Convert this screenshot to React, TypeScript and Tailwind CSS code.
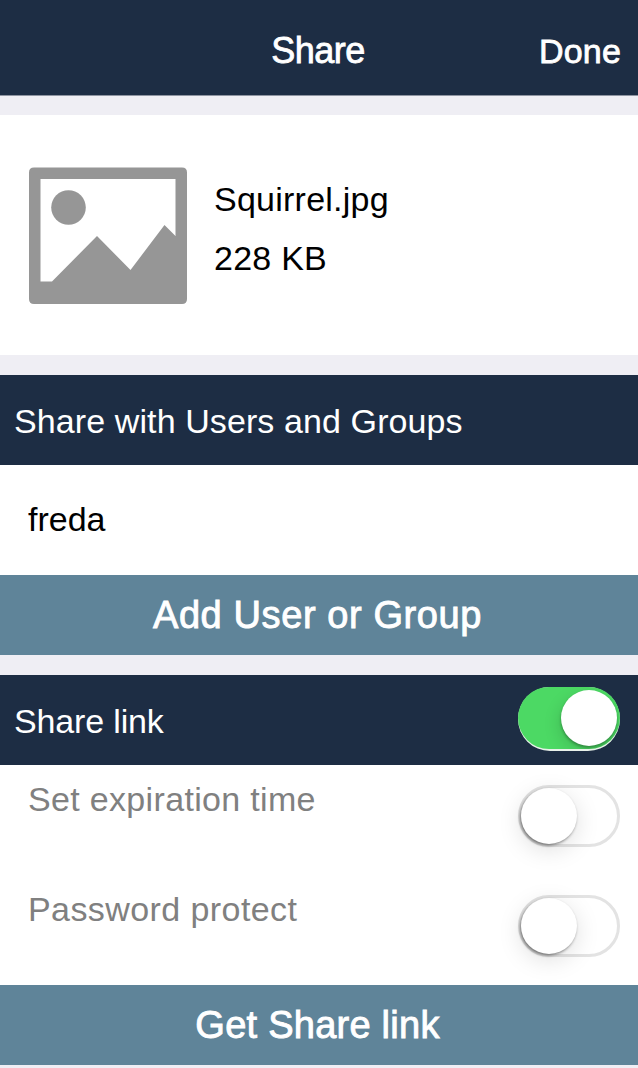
import type { ReactNode } from "react";

function Toggle({ on = false }: { on?: boolean }) {
  if (on) {
    return (
      <div role="switch" aria-checked="true" className="h-[64px] w-[102px] shrink-0 rounded-full bg-[#e9f2ea]">
        <div className="flex h-[62px] items-center justify-end overflow-hidden rounded-full bg-[#4cd964] pr-[3px]">
          <div className="size-[56px] rounded-full bg-white shadow-[-3px_6px_16px_rgba(0,0,0,0.12),0_2px_3px_rgba(0,0,0,0.3)]" />
        </div>
      </div>
    );
  }
  return (
    <div role="switch" aria-checked="false" className="flex h-[62px] w-[102px] shrink-0 items-center rounded-full border-[3px] border-[#e3e3e3] bg-white">
      <div className="size-[56px] rounded-full bg-white shadow-[0_6px_24px_rgba(0,0,0,0.13),-1px_1.5px_3px_rgba(0,0,0,0.45)]" />
    </div>
  );
}

function SectionBar({ title, children }: { title: ReactNode; children?: ReactNode }) {
  return (
    <div className="flex h-[90px] shrink-0 justify-between bg-[#1d2d44] pr-[18px] pl-[14px] text-white">
      <h2 className="leading-[92px]">{title}</h2>
      {children}
    </div>
  );
}

function ActionButton({ children }: { children: ReactNode }) {
  return (
    <button className="block h-[80px] w-full shrink-0 bg-[#5f8499] pr-[3px] text-center text-[38px] leading-[80px] text-white [-webkit-text-stroke:0.9px_white]">
      {children}
    </button>
  );
}

function PictureIcon() {
  return (
    <svg className="mt-[52px] h-[138px] w-[158px] shrink-0" viewBox="0 0 158 138" fill="#969696">
      <path
        fillRule="evenodd"
        d="M5 .5H153Q158 .5 158 5.5V132Q158 137 153 137H5Q0 137 0 132V5.5Q0 .5 5 .5ZM11.5 12V114.5H23L68 69L101.5 103L135.500 58L146.500 69V12Z"
      />
      <circle cx="39.500" cy="40.500" r="17.300" />
    </svg>
  );
}

export default function App() {
  return (
    <main className="flex h-[1068px] w-[638px] flex-col overflow-hidden bg-[#efeef4] font-['Liberation_Sans',Arial,sans-serif] text-[34px] whitespace-nowrap text-black">
      <header className="grid h-[96px] shrink-0 grid-cols-[1fr_auto_1fr] border-b border-[#8e94a1] bg-[#1d2d44] pr-[17px] leading-[102px] text-white [-webkit-text-stroke:0.8px_white]">
        <h1 className="col-start-2 ml-[15px] text-[36px] leading-[101px] tracking-[-0.5px]">Share</h1>
        <button className="justify-self-end leading-[102px] tracking-[0.2px]">Done</button>
      </header>

      <section className="mt-[19px] flex h-[240px] shrink-0 bg-white pl-[29px]">
        <PictureIcon />
        <div className="ml-[27px] pt-[55px] leading-[59px] tracking-[0.24px]">
          <p>Squirrel.jpg</p>
          <p>228 KB</p>
        </div>
      </section>

      <section className="mt-[20px] shrink-0 bg-white">
        <SectionBar title={<span className="tracking-[0.1px]">Share with Users and Groups</span>} />
        <p className="h-[110px] pl-[28px] leading-[109px]">freda</p>
        <ActionButton>
          <span className="tracking-[0.6px]">Add User or Group</span>
        </ActionButton>
      </section>

      <section className="mt-[20px] shrink-0 bg-white">
        <SectionBar title={<span className="tracking-[-0.15px]">Share link</span>}>
          <div className="pt-[12px]">
            <Toggle on />
          </div>
        </SectionBar>
        <div className="flex h-[110px] justify-between pr-[18px] pl-[28px] text-[#808080]">
          <p className="leading-[69px] tracking-[0.33px]">Set expiration time</p>
          <div className="pt-[20px]">
            <Toggle />
          </div>
        </div>
        <div className="flex h-[110px] justify-between pr-[18px] pl-[28px] text-[#808080]">
          <p className="leading-[69px] tracking-[0.42px]">Password protect</p>
          <div className="pt-[20px]">
            <Toggle />
          </div>
        </div>
        <ActionButton>
          <span className="tracking-[0.25px]">Get Share link</span>
        </ActionButton>
      </section>
    </main>
  );
}
